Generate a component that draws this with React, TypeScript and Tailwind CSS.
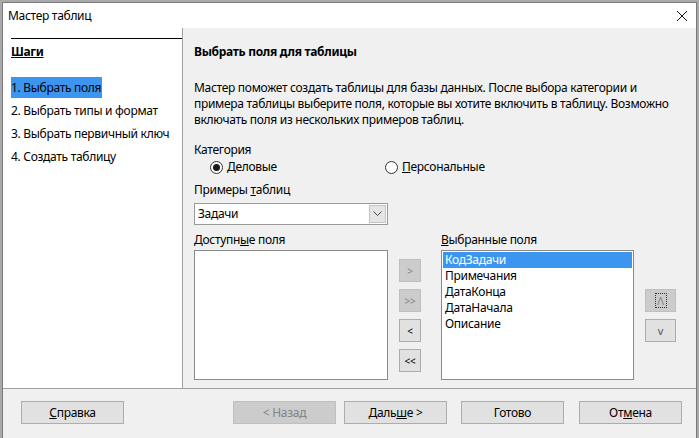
import React from 'react'

const font = { fontFamily: '"Noto Sans", "Open Sans", sans-serif' }

function Btn({ children, disabled, w = 'w-[103px]' }: { children: React.ReactNode; disabled?: boolean; w?: string }) {
  return (
    <div
      className={
        'h-[23px] flex items-center justify-center border ' +
        w +
        (disabled ? ' bg-[#cccccc] border-[#bfbfbf] text-[#838383]' : ' bg-[#e1e1e1] border-[#adadad] text-black')
      }
    >
      {children}
    </div>
  )
}

function Radio({ checked, children }: { checked?: boolean; children: React.ReactNode }) {
  return (
    <div className="flex items-center gap-[4px]">
      <div className="w-[13px] h-[13px] rounded-full border border-[#333] bg-white flex items-center justify-center">
        {checked && <div className="w-[7px] h-[7px] rounded-full bg-[#1a1a1a]" />}
      </div>
      <span>{children}</span>
    </div>
  )
}

const steps = ['1. Выбрать поля', '2. Выбрать типы и формат', '3. Выбрать первичный ключ', '4. Создать таблицу']
const fields = ['КодЗадачи', 'Примечания', 'ДатаКонца', 'ДатаНачала', 'Описание']

export default function App() {
  return (
    <div className="w-[699px] h-[438px] overflow-hidden bg-[#a9a9a9] pt-[2px] px-[2px] text-[12px] leading-[16px] tracking-[-0.3px] text-black" style={font}>
      <div className="h-[440px] border border-b-0 border-[#7a7a7a] bg-white flex flex-col">
        {/* title bar */}
        <div className="h-[25px] flex items-center justify-between pl-[5px] pr-[8px] bg-white">
          <span className="text-[12px]">Мастер таблиц</span>
          <svg width="12" height="12" viewBox="0 0 12 12">
            <path d="M1 1 L11 11 M11 1 L1 11" stroke="#111" strokeWidth="1" />
          </svg>
        </div>

        {/* body */}
        <div className="flex h-[360px]">
          <div className="w-[180px] shrink-0 bg-white border-r border-[#a0a0a0] pt-[10px]">
            <div className="ml-[8px] border-t border-black" />
            <div className="ml-[8px] mt-[5px] font-bold underline">Шаги</div>
            <div className="ml-[8px] mt-[16px]">
              {steps.map((s, i) => (
                <div key={s} className="h-[23px] flex items-center">
                  <span className={i === 0 ? 'bg-[#3c96f0] h-[21px] leading-[21px] pr-[1px]' : ''}>{s}</span>
                </div>
              ))}
            </div>
          </div>

          <div className="flex-1 bg-[#f0f0f0] pl-[11px] pt-[16px]">
            <div className="font-bold">Выбрать поля для таблицы</div>
            <p className="mt-[20px]">
              Мастер поможет создать таблицы для базы данных. После выбора категории и
              <br />
              примера таблицы выберите поля, которые вы хотите включить в таблицу. Возможно
              <br />
              включать поля из нескольких примеров таблиц.
            </p>
            <div className="mt-[14px]">Категория</div>
            <div className="mt-[1px] flex pl-[16px]">
              <div className="w-[175px]">
                <Radio checked>
                  <u>Д</u>еловые
                </Radio>
              </div>
              <Radio>
                <u>П</u>ерсональные
              </Radio>
            </div>
            <div className="mt-[7px]">
              Примеры <u>т</u>аблиц
            </div>
            <div className="mt-[5px] w-[194px] h-[22px] bg-white border border-[#9a9a9a] flex items-center justify-between pl-[3px] pr-[1px]">
              <span>Задачи</span>
              <div className="w-[17px] h-[18px] bg-[#e5e5e5] border border-[#c4c4c4] flex items-center justify-center">
                <svg width="9" height="6" viewBox="0 0 9 6">
                  <path d="M0.5 0.5 L4.5 4.5 L8.5 0.5" fill="none" stroke="#444" strokeWidth="1" />
                </svg>
              </div>
            </div>

            <div className="mt-[7px] flex">
              <div className="w-[194px]">
                <div className="h-[16px]">
                  Доступн<u>ы</u>е поля
                </div>
                <div className="mt-[2px] h-[130px] bg-white border border-[#8a8a8a]" />
              </div>
              <div className="ml-[11px] pt-[27px] flex flex-col gap-[7px] text-[10px]">
                <Btn disabled w="w-[22px]">&gt;</Btn>
                <Btn disabled w="w-[22px]">&gt;&gt;</Btn>
                <Btn w="w-[22px]">&lt;</Btn>
                <Btn w="w-[22px]">&lt;&lt;</Btn>
              </div>
              <div className="ml-[20px] w-[193px]">
                <div className="h-[16px]">
                  <u>В</u>ыбранные поля
                </div>
                <div className="mt-[2px] h-[130px] bg-white border border-[#8a8a8a] p-[1px]">
                  {fields.map((f, i) => (
                    <div key={f} className={'h-[16px] pl-[2px] ' + (i === 0 ? 'bg-[#3c96f0] text-white' : '')}>
                      {f}
                    </div>
                  ))}
                </div>
              </div>
              <div className="ml-[11px] pt-[57px] flex flex-col gap-[7px] text-[11px]">
                <Btn disabled w="w-[31px]">
                  <span className="border border-dotted border-[#333] w-[12px] h-[15px] flex items-center justify-center">Λ</span>
                </Btn>
                <Btn w="w-[31px]">
                  <span className="text-[#555]">v</span>
                </Btn>
              </div>
            </div>
          </div>
        </div>

        {/* footer */}
        <div className="flex-1 bg-[#f0f0f0] border-t border-[#a0a0a0] pt-[12px] pl-[18px] flex items-start">
          <Btn>
            <span>
              <u>С</u>правка
            </span>
          </Btn>
          <div className="ml-[109px]">
            <Btn disabled>&lt; Назад</Btn>
          </div>
          <div className="ml-[8px]">
            <Btn>
              <span>
                Даль<u>ш</u>е &gt;
              </span>
            </Btn>
          </div>
          <div className="ml-[14px]">
            <Btn>Готово</Btn>
          </div>
          <div className="ml-[15px]">
            <Btn>
              <span>
                От<u>м</u>ена
              </span>
            </Btn>
          </div>
        </div>
      </div>
    </div>
  )
}
